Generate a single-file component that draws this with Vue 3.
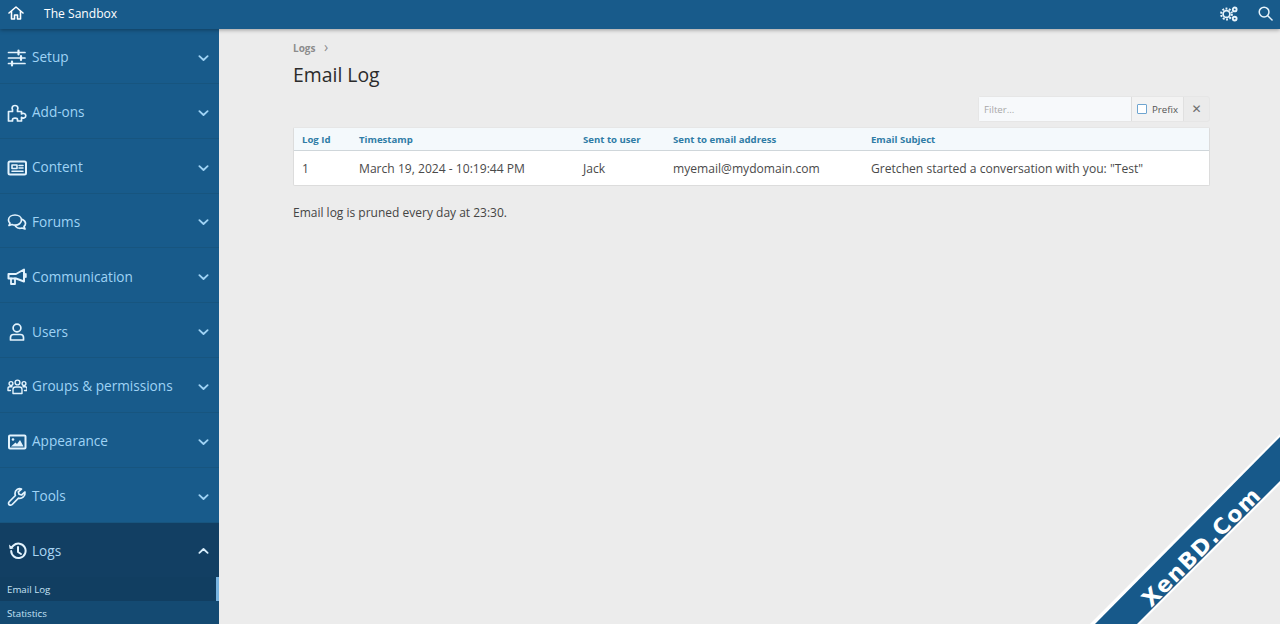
<script setup>
const navItems = [
  { label: 'Setup', icon: 'setup' },
  { label: 'Add-ons', icon: 'addons' },
  { label: 'Content', icon: 'content' },
  { label: 'Forums', icon: 'forums' },
  { label: 'Communication', icon: 'comm' },
  { label: 'Users', icon: 'users' },
  { label: 'Groups & permissions', icon: 'groups' },
  { label: 'Appearance', icon: 'appearance' },
  { label: 'Tools', icon: 'tools' },
  { label: 'Logs', icon: 'logs', open: true }
]

const columns = ['Log Id', 'Timestamp', 'Sent to user', 'Sent to email address', 'Email Subject']

const row = ['1', 'March 19, 2024 - 10:19:44 PM', 'Jack', 'myemail@mydomain.com', 'Gretchen started a conversation with you: "Test"']
</script>

<template>
  <div class="page">
    <header class="topbar">
      <svg class="home" viewBox="0 0 16 16" width="16" height="16" fill="none" stroke="#fff" stroke-width="1.6" stroke-linejoin="round" stroke-linecap="round">
        <path d="M1 8 L8 2 L15 8" />
        <path d="M3.5 6.5 V14 H6.5 V10 H9.5 V14 H12.5 V6.5" />
      </svg>
      <span class="board">The Sandbox</span>
      <span class="spacer"></span>
      <svg class="cogs" viewBox="0 0 18 16" width="18" height="16" fill="none" stroke="#e6f3fb">
        <circle cx="6.5" cy="8" r="5.4" stroke-dasharray="1.9 1.5" stroke-width="2" />
        <circle cx="6.5" cy="8" r="3.4" stroke-width="1.7" />
        <circle cx="14.7" cy="3.4" r="1.9" stroke-width="1.9" />
        <circle cx="14.7" cy="12.6" r="1.9" stroke-width="1.9" />
      </svg>
      <svg class="search" viewBox="0 0 16 16" width="15" height="15" fill="none" stroke="#e6f3fb" stroke-width="1.6" stroke-linecap="round">
        <circle cx="6.5" cy="6.5" r="5.2" />
        <path d="M10.4 10.4 L15 15" />
      </svg>
    </header>

    <div class="body">
      <aside class="sidebar">
        <div v-for="item in navItems" :key="item.label" class="nav-item" :class="{ open: item.open }">
          <svg class="nav-icon" viewBox="0 0 20 20" width="20" height="20" fill="none" stroke="currentColor" stroke-width="1.7" stroke-linecap="round" stroke-linejoin="round">
            <template v-if="item.icon === 'setup'">
              <path d="M1.5 4.5 H18 M1.5 10 H18 M1.5 15.5 H18" />
              <path d="M11.5 2.5 V6.5 M14 8 V12 M5 13.5 V17.5" stroke-width="2.2" />
            </template>
            <template v-else-if="item.icon === 'addons'">
              <path d="M1.5 8.5 H5.5 V6.5 C4.8 5.5 4.8 2.5 8 2.5 C11.2 2.5 11.2 5.5 10.5 6.5 V8.5 H14.5 V11 C15.5 9.8 18.8 10.2 18.8 12.7 C18.8 15.2 15.5 15.6 14.5 14.4 V18 H10.5 V16.5 C10.5 14.6 5.5 14.6 5.5 16.5 V18 H1.5 Z" />
            </template>
            <template v-else-if="item.icon === 'content'">
              <rect x="1.5" y="3.5" width="17.5" height="13" rx="1.5" stroke-width="2" />
              <path d="M5 7 H10 V10.5 H5 Z M12 7.5 H16 M12 10 H16 M5 13.2 H16" stroke-width="1.6" />
            </template>
            <template v-else-if="item.icon === 'forums'">
              <path d="M8 3 C4.5 3 1.5 5 1.5 8 C1.5 9.3 2 10.3 3 11.2 L2 13.5 L5 12.5 C6 13 7 13.2 8 13.2 C11.5 13.2 14.5 11 14.5 8 C14.5 5 11.5 3 8 3 Z" />
              <path d="M15.5 7.5 C17.5 8.5 18.5 10 18.5 11.5 C18.5 12.8 18 13.6 17 14.5 L18 17 L15 16 C12.5 16.8 10 16 8.5 14.2" />
            </template>
            <template v-else-if="item.icon === 'comm'">
              <path d="M1.5 7 H9 L17 2.5 V14.5 L9 11.5 H1.5 Z" stroke-width="2" />
              <path d="M4 11.5 V17 H8 V11.5 M18.8 7 V10" stroke-width="1.8" />
            </template>
            <template v-else-if="item.icon === 'users'">
              <circle cx="10" cy="6" r="3.9" />
              <path d="M3.5 18 V15.5 C3.5 13.5 5 12.5 6.5 12.5 H13.5 C15 12.5 16.5 13.5 16.5 15.5 V18 Z" />
            </template>
            <template v-else-if="item.icon === 'groups'">
              <circle cx="4" cy="6.5" r="1.9" stroke-width="1.4" />
              <circle cx="10.5" cy="5.5" r="2.4" stroke-width="1.4" />
              <circle cx="17" cy="6.5" r="1.9" stroke-width="1.4" />
              <path d="M6 16.5 V12.5 C6 11 7 10 8.5 10 H12.5 C14 10 15 11 15 12.5 V16.5 Z M3.5 13.5 H1 V11.5 C1 10.5 2 9.8 3 9.8 H5 M17.5 13.5 H20 V11.5 C20 10.5 19 9.8 18 9.8 H16" stroke-width="1.4" />
            </template>
            <template v-else-if="item.icon === 'appearance'">
              <rect x="2" y="3.5" width="16.5" height="13" rx="1" stroke-width="2" />
              <circle cx="6" cy="7.5" r="1.3" fill="currentColor" stroke="none" />
              <path d="M4 14.5 L8.5 10.5 L10 12 L13 8 L16.5 14.5 Z" fill="currentColor" stroke="none" />
            </template>
            <template v-else-if="item.icon === 'tools'">
              <path d="M18 5 L14.6 8 L12 7.2 L11.3 4.8 L14.5 2 C11.5 1 8 3 8 6.5 C8 7.3 8.2 8 8.4 8.5 L2 15 C1 16.2 1.6 18.8 4.3 18 C4.7 18 5 17.7 5.2 17.5 L11.5 11.2 C15 12 18.6 9 18 5 Z" />
            </template>
            <template v-else>
              <path d="M4.2 10 A7.2 7.2 0 1 0 6.5 4.5 L4 7" stroke-width="2" />
              <path d="M2 3.5 L2.5 7.8 L6.7 7.5" fill="currentColor" stroke="none" />
              <path d="M11 6 V11 L14 13" stroke-width="2" />
            </template>
          </svg>
          <span class="nav-label">{{ item.label }}</span>
          <svg class="chevron" viewBox="0 0 12 8" width="11" height="8" fill="none" stroke="currentColor" stroke-width="2" stroke-linecap="round" stroke-linejoin="round">
            <path :d="item.open ? 'M1.5 6 L6 1.8 L10.5 6' : 'M1.5 2 L6 6.2 L10.5 2'" />
          </svg>
        </div>
        <div class="sub-item active">Email Log</div>
        <div class="sub-item">Statistics</div>
      </aside>

      <main class="content">
        <div class="crumb">Logs <span class="crumb-sep">›</span></div>
        <h1>Email Log</h1>

        <div class="filter-row">
          <div class="filter">
            <span class="filter-input">Filter...</span>
            <span class="filter-prefix"><i class="checkbox"></i>Prefix</span>
            <span class="filter-clear">✕</span>
          </div>
        </div>

        <div class="log-table">
          <div class="row head">
            <span v-for="c in columns" :key="c">{{ c }}</span>
          </div>
          <div class="row">
            <span v-for="c in row" :key="c">{{ c }}</span>
          </div>
        </div>

        <p class="note">Email log is pruned every day at 23:30.</p>
      </main>
    </div>

    <svg class="ribbon" viewBox="0 0 190 190" width="190" height="190">
      <polygon points="190,0 190,50 50,190 0,190" fill="#fff" />
      <polygon points="190,3 190,47 47,190 5,190" fill="#17598a" />
      <text x="0" y="0" transform="translate(61 174) rotate(-45)" class="ribbon-text">XenBD.Com</text>
    </svg>
  </div>
</template>

<style scoped>
.page {
  position: relative;
  width: 1280px;
  height: 624px;
  overflow: hidden;
  background: #ececec;
  font-family: "Open Sans", "Noto Sans", sans-serif;
  color: #333;
}

.topbar {
  position: relative;
  z-index: 2;
  height: 29px;
  display: flex;
  align-items: center;
  padding: 0 7px 0 8px;
  background: #185b8b;
  box-shadow: 0 1px 4px rgba(0, 0, 0, 0.35);
  color: #fff;
  box-sizing: border-box;
}

.home {
  margin-bottom: 3px;
}

.board {
  margin-left: 20px;
  margin-bottom: 3px;
  font-size: 12.1px;
}

.spacer {
  flex: 1;
}

.cogs {
  margin-right: 20px;
  margin-bottom: 2px;
}

.search {
  margin-bottom: 2px;
}

.body {
  display: flex;
  height: 595px;
}

.sidebar {
  width: 219px;
  flex-shrink: 0;
  background: #185b8b;
  overflow: hidden;
}

.nav-item {
  height: 54.85px;
  box-sizing: border-box;
  display: flex;
  align-items: center;
  padding: 4px 9px 0 7px;
  color: #9fd3f5;
  border-bottom: 1px solid #17557f;
  font-size: 13.6px;
}

.nav-item.open {
  padding-top: 2px;
  background: #123f63;
  color: #a9d5f2;
  border-bottom: 0;
}

.nav-icon {
  width: 20px;
  color: #e3f3fd;
  flex-shrink: 0;
}

.nav-label {
  flex: 1;
  margin-left: 5px;
  margin-bottom: 2px;
}

.chevron {
  color: #9fd3f5;
  margin-right: 1px;
}

.open .chevron {
  color: #d9eefb;
}

.sub-item {
  height: 24px;
  line-height: 26px;
  padding-left: 7px;
  font-size: 9.7px;
  color: #c5e3f6;
  background: #144a72;
}

.sub-item.active {
  background: #113e61;
  border-right: 3px solid #79b4e0;
  box-sizing: border-box;
}

.content {
  flex: 1;
  padding: 11px 70px 0 74px;
  min-width: 0;
}

.crumb {
  font-size: 10px;
  font-weight: 700;
  color: #8c8c8c;
  line-height: 13px;
}

.crumb-sep {
  margin-left: 6px;
  font-size: 14px;
  font-weight: 400;
}

h1 {
  margin: 6px 0 0;
  font-size: 19.4px;
  font-weight: 400;
  line-height: 27px;
  color: #2b2b2b;
}

.filter-row {
  display: flex;
  justify-content: flex-end;
  margin-top: 8px;
}

.filter {
  display: flex;
  height: 26px;
  font-size: 9.7px;
  line-height: 25px;
  border-radius: 3px;
  background: #ebebeb;
  border: 1px solid #e6e6e6;
  box-sizing: border-box;
}

.filter-input {
  width: 153px;
  padding-left: 5px;
  box-sizing: border-box;
  background: #f7f9fb;
  color: #a8a8a8;
  border-right: 1px solid #dcdcdc;
}

.filter-prefix {
  width: 52px;
  display: flex;
  align-items: center;
  padding-left: 5px;
  box-sizing: border-box;
  background: #f3f3f3;
  color: #555;
  border-right: 1px solid #e0e0e0;
}

.checkbox {
  width: 8px;
  height: 8px;
  margin-right: 5px;
  border: 1px solid #6fa5d0;
  border-radius: 1px;
  background: #fff;
}

.filter-clear {
  width: 25px;
  text-align: center;
  color: #6e6e6e;
  font-family: "DejaVu Sans", sans-serif;
  font-size: 12px;
  font-weight: 700;
}

.log-table {
  margin-top: 5px;
  background: #fff;
  border: 1px solid #dcdcdc;
  border-top-color: #e6e6e6;
  border-radius: 2px;
  font-size: 12.1px;
  color: #4a4a4a;
}

.row {
  display: grid;
  grid-template-columns: 57px 224px 90px 198px 1fr;
  padding-left: 8px;
  height: 34px;
  align-items: center;
}

.row.head {
  height: 22px;
  background: #f4f9fc;
  border-bottom: 1px solid #cfd6da;
  color: #2f7ca6;
  font-size: 9.6px;
  font-weight: 700;
}

.note {
  margin: 18px 0 0;
  font-size: 12px;
  color: #444;
}

.ribbon {
  position: absolute;
  right: 0;
  bottom: 0;
}

.ribbon-text {
  font-family: "DejaVu Sans", sans-serif;
  font-size: 22px;
  font-weight: 700;
  letter-spacing: 1.5px;
  fill: #fff;
}
</style>
